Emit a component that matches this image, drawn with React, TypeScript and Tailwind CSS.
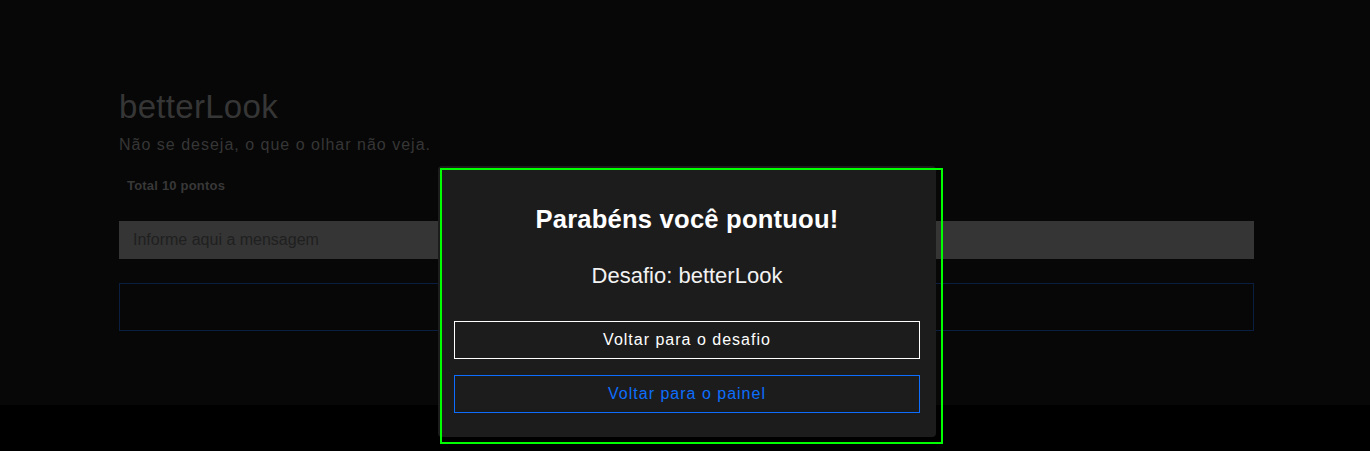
export default function App() {
  return (
    <div className="relative min-h-screen bg-black font-['Liberation_Sans',Arial,sans-serif]">
      {/* page behind the backdrop */}
      <div className="h-[405px] bg-[#070707] pl-[119px] pr-[116px] pt-[87px]">
        <h1 className="text-[33px] leading-[40px] tracking-[0.3px] text-[#363636]">betterLook</h1>
        <p className="mt-[6px] text-[16px] leading-[24px] tracking-[1px] text-[#363636]">
          Não se deseja, o que o olhar não veja.
        </p>
        <div className="mt-[19px] pl-2 text-[13px] font-bold leading-[20px] tracking-[0.2px] text-[#383838]">
          Total 10 pontos
        </div>
        <input
          type="text"
          placeholder="Informe aqui a mensagem"
          className="mt-[25px] block h-[38px] w-full border border-[#353535] bg-[#353535] px-[13px] text-[16px] outline-none placeholder:text-[#202020]"
        />
        <div className="mt-[24px] h-[48px] border border-[#0a1f3f] bg-[#070707]" />
      </div>

      {/* modal */}
      <div className="absolute left-[438px] top-[166px] w-[498px] rounded bg-[#1c1c1c] px-4 pt-[37px] pb-[24px]">
        <h2 className="text-center text-[25.6px] font-bold leading-[32px] tracking-[0.2px] text-white">
          Parabéns você pontuou!
        </h2>
        <p className="mt-[27px] text-center text-[22px] leading-[28px] text-[#f2f2f2]">Desafio: betterLook</p>
        <div className="mt-[31px] flex flex-col gap-4">
          <button className="h-[38px] w-full border border-white text-[16px] tracking-[1px] text-white">
            Voltar para o desafio
          </button>
          <button className="h-[38px] w-full border border-[#0d6efd] text-[16px] tracking-[1px] text-[#0d6efd]">
            Voltar para o painel
          </button>
        </div>
      </div>

      {/* highlight outline */}
      <div className="pointer-events-none absolute left-[440px] top-[168px] h-[276px] w-[503px] border-2 border-[#00ff00]" />
    </div>
  );
}
